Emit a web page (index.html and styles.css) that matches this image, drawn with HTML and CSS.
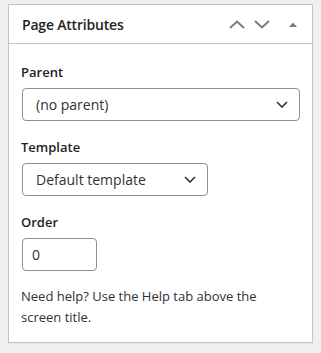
FILE: index.html
```html
<!DOCTYPE html>
<html lang="en">
<head>
    <meta charset="UTF-8">
    <meta name="viewport" content="width=device-width, initial-scale=1.0">
    <title>Page Attributes</title>
    <link rel="stylesheet" href="styles.css">
</head>
<body>
    <div class="postbox">
        <!-- Box header -->
        <div class="postbox-header">
            <h2>Page Attributes</h2>
            <div class="handle-actions">
                <button class="handle-btn" aria-label="Move up">
                    <svg width="16" height="9" viewBox="0 0 16 9"><path d="M1 8 L8 1.5 L15 8" fill="none" stroke="#787c82" stroke-width="2"/></svg>
                </button>
                <button class="handle-btn" aria-label="Move down">
                    <svg width="16" height="9" viewBox="0 0 16 9"><path d="M1 1 L8 7.5 L15 1" fill="none" stroke="#787c82" stroke-width="2"/></svg>
                </button>
                <button class="handle-btn toggle" aria-label="Toggle panel">
                    <svg width="10" height="5" viewBox="0 0 10 5"><path d="M1 5 L5 0.5 L9 5 Z" fill="#787c82"/></svg>
                </button>
            </div>
        </div>

        <div class="inside">
            <p class="field-label">Parent</p>
            <div class="select wide">
                <span>(no parent)</span>
                <svg width="12" height="7" viewBox="0 0 12 7"><path d="M1 1 L6 6 L11 1" fill="none" stroke="#2c3338" stroke-width="1.6"/></svg>
            </div>

            <p class="field-label">Template</p>
            <div class="select">
                <span>Default template</span>
                <svg width="12" height="7" viewBox="0 0 12 7"><path d="M1 1 L6 6 L11 1" fill="none" stroke="#2c3338" stroke-width="1.6"/></svg>
            </div>

            <p class="field-label">Order</p>
            <div class="text-input">0</div>

            <p class="help">Need help? Use the Help tab above the screen title.</p>
        </div>
    </div>
</body>
</html>
```

FILE: styles.css
```css
body {
    font-family: "Open Sans", "Noto Sans", sans-serif;
    background-color: #f0f0f1;
    color: #1d2327;
    margin: 0;
    padding: 4px 8px;
}
.postbox {
    background-color: #fff;
    border: 1px solid #c3c4c7;
    box-shadow: 0 1px 1px rgba(0, 0, 0, 0.04);
}
.postbox-header {
    display: flex;
    align-items: center;
    justify-content: space-between;
    height: 38px;
    border-bottom: 1px solid #c3c4c7;
}
.postbox-header h2 {
    margin: 0;
    padding: 0 13px;
    font-size: 14px;
    font-weight: 600;
    letter-spacing: -0.2px;
}
.handle-actions {
    display: flex;
    align-items: center;
    padding-right: 14px;
}
.handle-btn {
    background: none;
    border: none;
    padding: 0;
    height: 36px;
    display: flex;
    align-items: center;
    cursor: pointer;
}
.handle-btn + .handle-btn {
    margin-left: 9px;
}
.handle-btn.toggle {
    margin-left: 18px;
}
.inside {
    padding: 19px 12px 14px;
}
.field-label {
    margin: 0 0 7px;
    font-size: 13px;
    font-weight: 600;
    line-height: 18px;
}
.select {
    box-sizing: border-box;
    display: flex;
    align-items: center;
    justify-content: space-between;
    width: 186px;
    height: 33px;
    margin: 0 0 17px 1px;
    padding: 0 11px 0 13px;
    border: 1px solid #8c8f94;
    border-radius: 4px;
    font-size: 14px;
    color: #2c3338;
}
.select.wide {
    width: 278px;
}
.text-input {
    box-sizing: border-box;
    width: 75px;
    height: 33px;
    margin: 0 0 15px 1px;
    padding: 0 9px;
    border: 1px solid #8c8f94;
    border-radius: 4px;
    font-size: 14px;
    line-height: 31px;
    color: #2c3338;
}
.help {
    margin: 0;
    font-size: 13px;
    line-height: 21px;
    color: #2c3338;
}
```
